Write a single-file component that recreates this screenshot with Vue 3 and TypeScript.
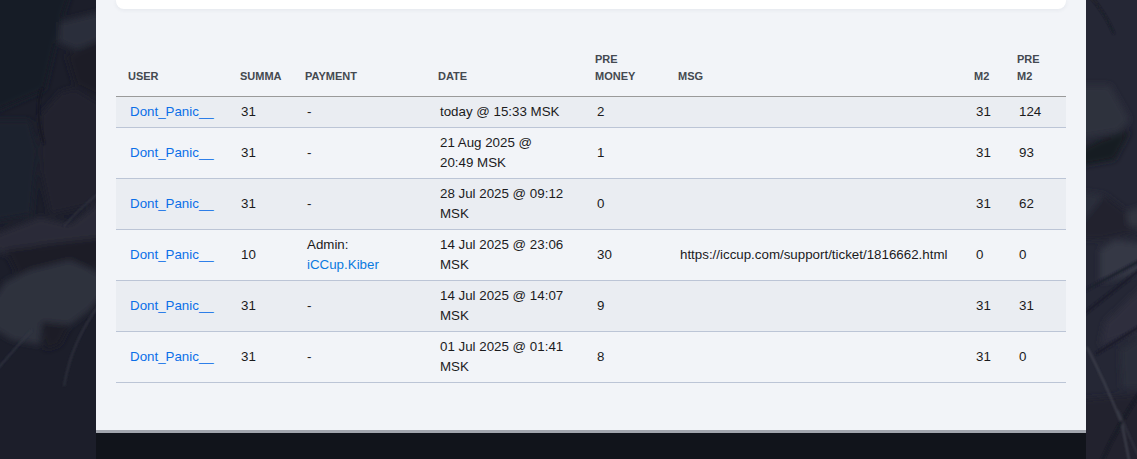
<script setup lang="ts">
interface Row {
  summa: string
  payment: string
  admin?: string
  date: string
  pre: string
  msg: string
  m2: string
  preM2: string
}

const rows: Row[] = [
  { summa: '31', payment: '-', date: 'today @ 15:33 MSK', pre: '2', msg: '', m2: '31', preM2: '124' },
  { summa: '31', payment: '-', date: '21 Aug 2025 @ 20:49 MSK', pre: '1', msg: '', m2: '31', preM2: '93' },
  { summa: '31', payment: '-', date: '28 Jul 2025 @ 09:12 MSK', pre: '0', msg: '', m2: '31', preM2: '62' },
  { summa: '10', payment: 'Admin:', admin: 'iCCup.Kiber', date: '14 Jul 2025 @ 23:06 MSK', pre: '30', msg: 'https://iccup.com/support/ticket/1816662.html', m2: '0', preM2: '0' },
  { summa: '31', payment: '-', date: '14 Jul 2025 @ 14:07 MSK', pre: '9', msg: '', m2: '31', preM2: '31' },
  { summa: '31', payment: '-', date: '01 Jul 2025 @ 01:41 MSK', pre: '8', msg: '', m2: '31', preM2: '0' },
]
</script>

<template>
  <div class="page">
    <svg class="backdrop" width="1137" height="459" viewBox="0 0 1137 459" aria-hidden="true">
      <defs>
        <filter id="soft" x="-40" y="-40" width="1217" height="539" filterUnits="userSpaceOnUse">
          <feGaussianBlur stdDeviation="3" />
        </filter>
        <filter id="softer" x="-40" y="-40" width="1217" height="539" filterUnits="userSpaceOnUse">
          <feGaussianBlur stdDeviation="0.8" />
        </filter>
      </defs>
      <rect width="96" height="459" fill="#1c1e2a" />
      <rect x="1086" width="51" height="459" fill="#252735" />
      <g filter="url(#soft)">
        <polygon points="-20,-20 75,-20 60,25 45,90 -20,118" fill="#191b26" />
        <polygon points="60,22 115,8 115,34 76,50 58,42" fill="#2b2d3a" />
        <polygon points="66,55 115,35 115,105 75,85" fill="#1a1c27" />
        <polygon points="40,115 60,92 75,88 115,112 115,200 50,215 40,170" fill="#21232f" />
        <polygon points="-20,120 30,120 38,150 32,215 -20,224" fill="#1f212d" />
        <polygon points="-20,240 40,217 70,224 115,190 115,236 40,245 5,255" fill="#292b38" />
        <polygon points="5,250 115,236 115,265 40,276 18,276" fill="#1b1d28" />
        <polygon points="5,282 30,270 70,260 115,280 90,310 70,325 42,322 40,345 12,340 -20,320" fill="#2f313e" />
        <polygon points="42,322 70,325 60,345 45,350" fill="#1a1c27" />
        <polygon points="1070,85 1110,85 1130,120 1118,132 1070,140" fill="#2e303d" />
        <polygon points="1070,155 1100,140 1131,130 1115,160 1070,168" fill="#181a24" />
        <polygon points="1070,190 1105,195 1105,230 1070,238" fill="#2c2e3b" />
        <polygon points="1105,195 1125,210 1137,232 1100,240 1070,238" fill="#20222e" />
        <polygon points="1126,212 1160,200 1160,232 1128,226" fill="#323441" />
        <polygon points="1100,250 1115,240 1160,246 1160,270 1100,282" fill="#363844" />
        <polygon points="1105,322 1160,270 1160,325 1100,346" fill="#2d2f3c" />
        <polygon points="1120,350 1160,325 1160,390 1122,388" fill="#2c2e3b" />
        <polygon points="1070,400 1160,392 1160,480 1070,480" fill="#21232f" />
      </g>
      <g fill="none" filter="url(#softer)">
        <path d="M-5 372 Q18 345 32 330" stroke="#363845" stroke-width="1.4" />
        <path d="M64 386 Q72 340 100 304" stroke="#343643" stroke-width="1.4" />
        <path d="M42 88 Q34 110 44 144" stroke="#171923" stroke-width="2" />
        <path d="M100 192 Q78 210 64 226" stroke="#343643" stroke-width="1.2" />
        <path d="M1090 -4 Q1106 14 1114 34" stroke="#1a1c27" stroke-width="2" />
        <path d="M1080 293 L1145 258" stroke="#1f212d" stroke-width="3" />
        <path d="M1080 317 L1145 266" stroke="#1d1f2a" stroke-width="3" />
        <path d="M1096 354 L1145 323" stroke="#1d1f2a" stroke-width="3" />
        <path d="M1087 347 Q1104 380 1122 424 L1130 465" stroke="#454752" stroke-width="1.6" />
        <path d="M1145 386 Q1120 420 1100 465" stroke="#191b25" stroke-width="3" />
        <path d="M1118 410 L1140 460" stroke="#363845" stroke-width="1.2" />
      </g>
    </svg>

    <main class="panel">
      <div class="card"></div>
      <table class="grid">
        <colgroup>
          <col class="c-user" />
          <col class="c-summa" />
          <col class="c-payment" />
          <col class="c-date" />
          <col class="c-pre" />
          <col class="c-msg" />
          <col class="c-m2" />
          <col class="c-prem2" />
        </colgroup>
        <thead>
          <tr>
            <th>USER</th>
            <th>SUMMA</th>
            <th>PAYMENT</th>
            <th>DATE</th>
            <th>PRE<br />MONEY</th>
            <th>MSG</th>
            <th>M2</th>
            <th>PRE<br />M2</th>
          </tr>
        </thead>
        <tbody>
          <tr v-for="(row, i) in rows" :key="i" :class="{ striped: i % 2 === 0 }">
            <td><a href="#" class="link">Dont_Panic__</a></td>
            <td class="summa">{{ row.summa }}</td>
            <td>
              {{ row.payment }}
              <template v-if="row.admin"><br /><a href="#" class="link alt">{{ row.admin }}</a></template>
            </td>
            <td class="date">{{ row.date }}</td>
            <td>{{ row.pre }}</td>
            <td>{{ row.msg }}</td>
            <td>{{ row.m2 }}</td>
            <td>{{ row.preM2 }}</td>
          </tr>
        </tbody>
      </table>
      <footer class="foot"></footer>
    </main>
  </div>
</template>

<style>
html,
body {
  margin: 0;
  overflow: hidden;
  background: #1c1e2a;
}
</style>

<style scoped>
.page {
  position: relative;
  width: 1137px;
  height: 459px;
  overflow: hidden;
  font-family: "Liberation Sans", Arial, sans-serif;
}
.backdrop {
  position: absolute;
  inset: 0;
}
.panel {
  position: relative;
  box-sizing: border-box;
  display: flex;
  flex-direction: column;
  align-items: center;
  width: 990px;
  height: 459px;
  margin-left: 96px;
  background: #f2f4f8;
}
.card {
  flex: none;
  width: 950px;
  height: 9px;
  background: #fff;
  border-radius: 0 0 8px 8px;
  box-shadow: 0 1px 4px rgba(40, 50, 80, 0.07);
}
.grid {
  flex: none;
  width: 950px;
  margin-top: 42px;
  border-collapse: separate;
  border-spacing: 0;
  table-layout: fixed;
  font-size: 13.33px;
  line-height: 20px;
  color: #1b1b1d;
}
.c-user { width: 112px; }
.c-summa { width: 65px; }
.c-payment { width: 133px; }
.c-date { width: 157px; }
.c-pre { width: 83px; }
.c-msg { width: 296px; }
.c-m2 { width: 43px; }
.c-prem2 { width: 61px; }
th {
  padding: 0 12px 11px;
  border-bottom: 1px solid #9a9a9a;
  font-size: 11px;
  line-height: 17px;
  font-weight: 700;
  text-align: left;
  vertical-align: bottom;
  color: #444950;
}
td {
  padding: 5px 13px 5px 14px;
  border-bottom: 1px solid #bcc5d6;
  vertical-align: middle;
}
td.summa {
  padding-left: 13px;
}
td.date {
  padding-right: 17px;
}
.striped td {
  background: #eaedf2;
}
.link {
  color: #0b6fe8;
  text-decoration: none;
}
.alt {
  color: #0a7ae0;
}
.foot {
  flex: none;
  box-sizing: border-box;
  width: 990px;
  height: 40px;
  margin-top: 47px;
  border-top: 3px solid #a2a6ae;
  background: #11141b;
}
</style>
